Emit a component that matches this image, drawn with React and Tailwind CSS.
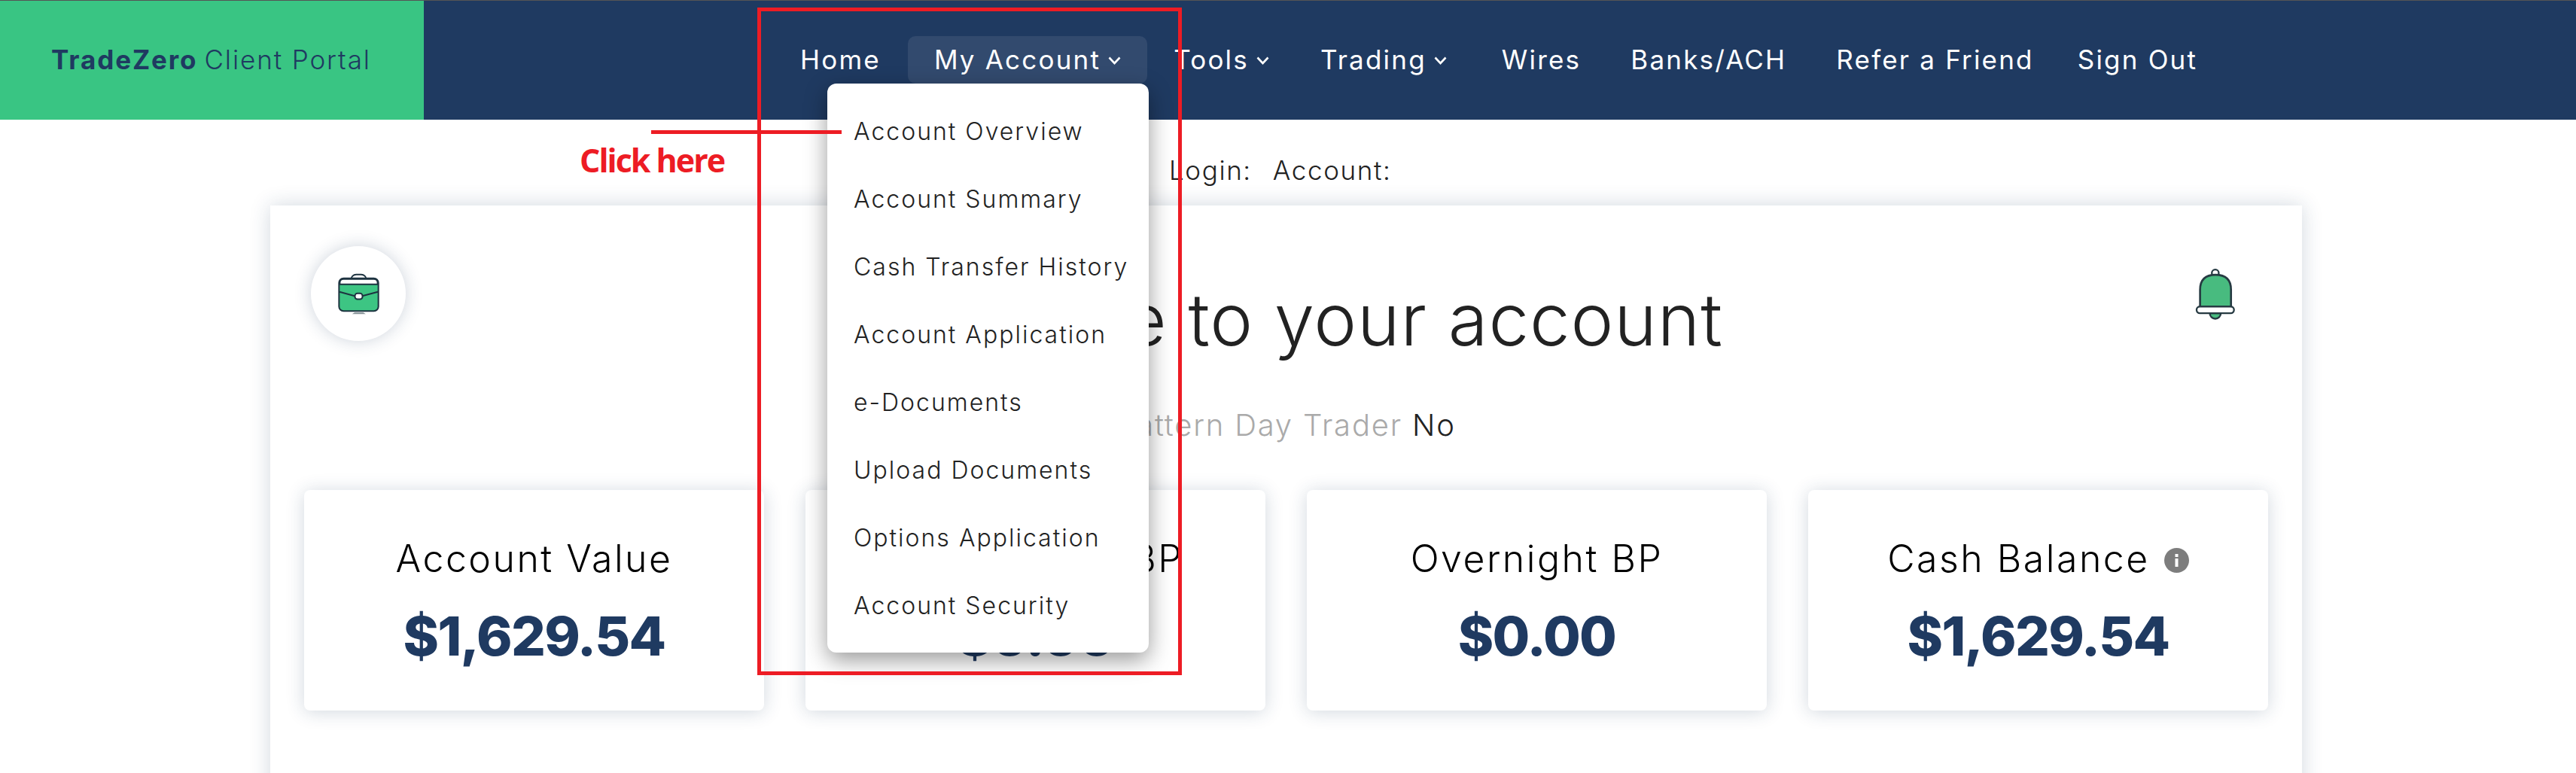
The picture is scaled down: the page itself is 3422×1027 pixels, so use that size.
import React from "react";

function Chevron() {
  return (
    <svg width="17" height="11" viewBox="0 0 17 11" fill="none" className="ml-[10px] mt-[1px] shrink-0">
      <path d="M1.5 1.5 L8.5 9 L15.5 1.5" stroke="#ffffff" strokeWidth="2.6" />
    </svg>
  );
}

function NavItem({ label, caret, active, className = "" }) {
  return (
    <div className={`flex h-[63px] items-center rounded-[10px] whitespace-nowrap ${active ? "bg-[#324a6e]" : ""} ${className}`}>
      <span>{label}</span>
      {caret && <Chevron />}
    </div>
  );
}

function Briefcase() {
  return (
    <svg width="59" height="57" viewBox="200 185 176 170" fill="none">
      <rect x="258" y="193" width="60" height="40" rx="20" fill="#ffffff" stroke="#1d3340" strokeWidth="6" />
      <rect x="210" y="208" width="156" height="130" rx="18" fill="#3dc583" stroke="#1d3340" strokeWidth="6" />
      <path d="M213 232 V226 Q213 211 228 211 H348 Q363 211 363 226 V232 Z" fill="#ffffff" stroke="#1d3340" strokeWidth="6" />
      <path d="M212 262 L272 278 M302 278 L364 262" stroke="#1d3340" strokeWidth="6" />
      <rect x="273" y="268" width="30" height="23" rx="10" fill="#ffffff" stroke="#1d3340" strokeWidth="6" />
      <path d="M262 350 L272 343 H306 L316 350 Z" fill="#8b979c" />
    </svg>
  );
}

function Bell() {
  return (
    <svg width="54" height="70" viewBox="105 75 163 210" fill="none">
      <circle cx="186" cy="95" r="14" fill="#ffffff" stroke="#263a42" strokeWidth="7" />
      <path d="M125 230 V162 Q125 102 187 102 Q249 102 249 162 V230 Z" fill="#48bb7f" stroke="#263a42" strokeWidth="8" />
      <path d="M164 256 a22 22 0 0 0 44 0 Z" fill="#48bb7f" stroke="#263a42" strokeWidth="7" />
      <rect x="111" y="229" width="150" height="27" rx="13" fill="#ffffff" stroke="#263a42" strokeWidth="7" />
    </svg>
  );
}

function Info() {
  return (
    <svg width="33" height="33" viewBox="0 0 33 33" className="ml-[19px] mt-[5px] shrink-0">
      <circle cx="16.5" cy="16.5" r="16.5" fill="#7d7d7d" />
      <rect x="14.5" y="14" width="4" height="11" fill="#ffffff" />
      <rect x="14.5" y="8" width="4" height="4" fill="#ffffff" />
    </svg>
  );
}

function Stat({ label, value, info }) {
  return (
    <div className="flex h-[293px] flex-col items-center rounded-[8px] bg-white pt-[63px] shadow-[0_2px_24px_rgba(31,58,97,0.2)]">
      <div className="flex h-[56px] items-center text-[50px] font-light leading-none text-black tracking-[2.5px] whitespace-nowrap">
        <span>{label}</span>
        {info && <Info />}
      </div>
      <div className="mt-[32px] text-[72px] font-extrabold leading-[86px] text-[#1f3a61] tracking-[-1.7px]">{value}</div>
    </div>
  );
}

const menu = [
  "Account Overview",
  "Account Summary",
  "Cash Transfer History",
  "Account Application",
  "e-Documents",
  "Upload Documents",
  "Options Application",
  "Account Security",
];

export default function App() {
  return (
    <div className="relative h-[1027px] w-[3422px] overflow-hidden bg-white font-['Inter',sans-serif]">
      <header className="flex h-[159px] border-t-[1px] border-[#555555] bg-[#1f3a61]">
        <div className="flex h-full w-[563px] items-center bg-[#39c583] pl-[68px] pb-[2px] text-[35px] text-[#1f3a61] whitespace-nowrap tracking-[1.9px]">
          <span className="font-bold">TradeZero</span>
          <span className="ml-[9px] font-light">Client Portal</span>
        </div>
        <nav className="ml-[500px] mt-[47px] flex h-[63px] text-[35px] font-normal text-white tracking-[2.2px]">
          <NavItem label="Home" />
          <NavItem label="My Account" caret active className="ml-[36px] px-[35px]" />
          <NavItem label="Tools" caret className="ml-[35px]" />
          <NavItem label="Trading" caret className="ml-[68px]" />
          <NavItem label="Wires" className="ml-[73px]" />
          <NavItem label="Banks/ACH" className="ml-[66px]" />
          <NavItem label="Refer a Friend" className="ml-[66px]" />
          <NavItem label="Sign Out" className="ml-[58px]" />
        </nav>
      </header>

      <main>
        <div className="flex h-[114px] items-center pl-[1553px] pt-[20px] text-[35px] font-light text-[#222222] tracking-[1.6px]">
          <span>Login:</span>
          <span className="ml-[28px]">Account:</span>
        </div>
        <section className="relative ml-[359px] h-[800px] w-[2699px] bg-white px-[45px] shadow-[0_0_26px_rgba(31,58,97,0.2)]">
          <div className="absolute left-[54px] top-[54px] flex h-[126px] w-[126px] items-center justify-center rounded-full bg-white shadow-[0_0_22px_rgba(31,58,97,0.22)]">
            <Briefcase />
          </div>
          <div className="absolute left-[2557px] top-[83px]">
            <Bell />
          </div>
          <h1 className="pt-[86px] text-center text-[96px] font-light leading-[130px] text-[#222222] tracking-[0.9px]">
            Welcome to your account
          </h1>
          <p className="mt-[51px] text-center text-[40px] font-light leading-[50px] text-[#aaaaaa] tracking-[1.8px]">
            Pattern Day Trader <span className="text-[#222222]">No</span>
          </p>
          <div className="mt-[61px] grid grid-cols-4 gap-[55px]">
            <Stat label="Account Value" value="$1,629.54" />
            <Stat label="Day Trading BP" value="$0.00" />
            <Stat label="Overnight BP" value="$0.00" />
            <Stat label="Cash Balance" value="$1,629.54" info />
          </div>
        </section>
      </main>

      <ul className="absolute left-[1099px] top-[111px] flex h-[756px] w-[427px] flex-col rounded-[12px] bg-white py-[19px] pl-[35px] text-[32px] font-light text-[#222222] tracking-[2px] shadow-[0_10px_30px_rgba(0,0,0,0.4)] whitespace-nowrap">
        {menu.map((m) => (
          <li key={m} className="flex h-[90px] shrink-0 items-center">{m}</li>
        ))}
      </ul>

      <div className="absolute left-[1006px] top-[10px] h-[887px] w-[564px] border-[5px] border-[#ed1c24]" />
      <div className="absolute left-[865px] top-[173px] h-[5px] w-[253px] bg-[#ed1c24]" />
      <div className="absolute left-[770px] top-[190px] font-['Open_Sans',sans-serif] text-[43px] font-bold leading-[46px] text-[#ed1c24] tracking-[-2px]">Click here</div>
    </div>
  );
}
